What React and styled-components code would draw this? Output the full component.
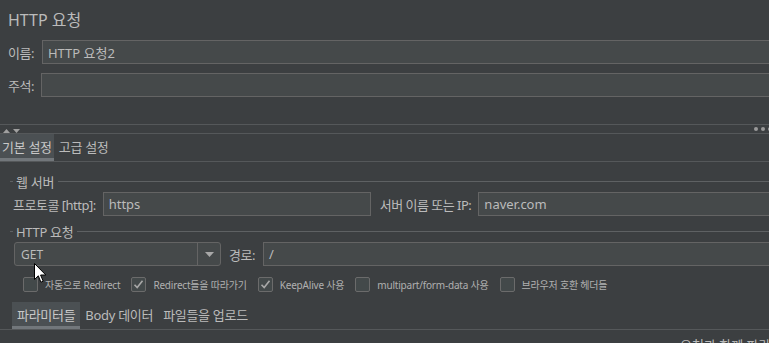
import React from 'react';
import styled, { createGlobalStyle } from 'styled-components';

const GlobalStyle = createGlobalStyle`
  html, body {
    margin: 0;
    padding: 0;
    background: #3c3f41;
    overflow: hidden;
  }
  body {
    font-family: "Noto Sans", "Noto Sans CJK KR", sans-serif;
    color: #bbbbbb;
  }
`;

const Page = styled.div`
  position: relative;
  width: 800px;
  height: 343px;
  background: #3c3f41;
  overflow: hidden;
  font-size: 13px;
`;

const Header = styled.div`
  padding: 10px 0 0 8px;
`;

const Title = styled.div`
  font-size: 16px;
  line-height: 20px;
  height: 20px;
`;

const FieldRow = styled.div`
  display: flex;
  align-items: center;
  gap: ${p => p.$gap || 7}px;
  margin-top: ${p => p.$top || 0}px;
  padding-left: ${p => p.$left || 0}px;
`;

const Label = styled.span`
  white-space: nowrap;
  font-size: 13px;
  letter-spacing: -0.5px;
  margin-left: ${p => p.$ml || 0}px;
`;

const TextBox = styled.div`
  box-sizing: border-box;
  height: 24px;
  flex: ${p => (p.$width ? '0 0 auto' : '1')};
  width: ${p => (p.$width ? `${p.$width}px` : 'auto')};
  border: 1px solid #646464;
  background: #45494a;
  padding: 0 5px;
  display: flex;
  align-items: center;
  font-size: 13px;
  color: #bbbbbb;
  white-space: nowrap;
`;

const SplitDivider = styled.div`
  margin-top: 27px;
  height: 8px;
  border-top: 1px solid #55585a;
  border-bottom: 1px solid #55585a;
  display: flex;
  align-items: center;
  justify-content: space-between;
  padding: 0 0 0 3px;
  width: 769px;
`;

const Arrows = styled.div`
  display: flex;
  gap: 3px;
  margin-top: 3px;
`;

const Dots = styled.div`
  display: flex;
  gap: 3px;
`;

const Dot = styled.span`
  width: 4px;
  height: 4px;
  border-radius: 50%;
  background: #9a9a9a;
`;

const TabBar = styled.div`
  display: flex;
  height: 27px;
  border-bottom: 1px solid #55585a;
  padding-left: ${p => p.$left || 0}px;
  margin-top: ${p => p.$top || 0}px;
`;

const Tab = styled.div`
  display: flex;
  align-items: center;
  padding: 0 ${p => p.$pad || 3}px 2px;
  font-size: 13px;
  letter-spacing: -0.3px;
  white-space: nowrap;
  background: ${p => (p.$active ? '#4b5053' : 'transparent')};
  box-shadow: ${p => (p.$active ? 'inset 0 -3px 0 #72777b' : 'none')};
  color: ${p => (p.$active ? '#c8c8c8' : '#bbbbbb')};
`;

const Group = styled.div`
  margin-top: ${p => p.$top}px;
`;

const GroupTitle = styled.div`
  display: flex;
  align-items: center;
  height: 18px;
  padding-left: 10px;
  font-size: 13px;
  letter-spacing: -0.3px;

  &::before {
    content: '';
    width: 3px;
    height: 1px;
    background: #5e6163;
    margin-right: 3px;
  }
  &::after {
    content: '';
    flex: 1;
    height: 1px;
    background: #5e6163;
    margin-left: 4px;
  }
`;

const Select = styled.div`
  box-sizing: border-box;
  width: 207px;
  height: 24px;
  border: 1px solid #646464;
  border-radius: 3px;
  background: #45494a;
  display: flex;
  align-items: stretch;
`;

const SelectValue = styled.div`
  flex: 1;
  display: flex;
  align-items: center;
  padding-left: 6px;
  font-size: 12px;
`;

const SelectArrow = styled.div`
  width: 22px;
  border-left: 1px solid #646464;
  display: flex;
  align-items: center;
  justify-content: center;
`;

const CheckRow = styled.div`
  display: flex;
  align-items: center;
  padding-left: 23px;
  margin-top: 11px;
  height: 15px;
`;

const CheckItem = styled.label`
  display: flex;
  align-items: center;
  gap: 7px;
  margin-right: ${p => p.$gap || 11}px;
  font-size: 10px;
  letter-spacing: -0.2px;
  white-space: nowrap;
  color: #b0b0b0;
`;

const Box = styled.span`
  box-sizing: border-box;
  width: 15px;
  height: 15px;
  border: 1px solid #6b6b6b;
  border-radius: 2px;
  background: #43494a;
  display: flex;
  align-items: center;
  justify-content: center;
`;

const BottomHeader = styled.div`
  padding-left: 680px;
  margin-top: 5px;
  font-size: 13px;
  white-space: nowrap;
`;

const Cursor = styled.svg`
  position: absolute;
  left: 34px;
  top: 263px;
`;

const Check = ({ checked, children, gap }) => (
  <CheckItem $gap={gap}>
    <Box>
      {checked && (
        <svg width="11" height="11" viewBox="0 0 11 11">
          <path d="M1.5 5.8 L4.2 8.6 L9.5 1.8" fill="none" stroke="#a8a8a8" strokeWidth="1.6" />
        </svg>
      )}
    </Box>
    {children}
  </CheckItem>
);

export default function App() {
  return (
    <Page>
      <GlobalStyle />
      <Header>
        <Title>HTTP 요청</Title>
        <FieldRow $top={10} $gap={8}>
          <Label>이름:</Label>
          <TextBox>HTTP 요청2</TextBox>
        </FieldRow>
        <FieldRow $top={9} $gap={7}>
          <Label>주석:</Label>
          <TextBox />
        </FieldRow>
      </Header>

      <SplitDivider>
        <Arrows>
          <svg width="7" height="4" viewBox="0 0 7 4"><path d="M0 4 L3.5 0 L7 4 Z" fill="#a0a0a0" /></svg>
          <svg width="7" height="4" viewBox="0 0 7 4"><path d="M0 0 L7 0 L3.5 4 Z" fill="#a0a0a0" /></svg>
        </Arrows>
        <Dots>
          <Dot />
          <Dot />
          <Dot />
        </Dots>
      </SplitDivider>

      <TabBar $left={0}>
        <Tab $active $pad={2}>기본 설정</Tab>
        <Tab $pad={5}>고급 설정</Tab>
      </TabBar>

      <Group $top={10}>
        <GroupTitle>웹 서버</GroupTitle>
        <FieldRow $top={2} $left={13} $gap={7}>
          <Label>프로토콜 [http]:</Label>
          <TextBox $width={268}>https</TextBox>
          <Label $ml={2}>서버 이름 또는 IP:</Label>
          <TextBox>naver.com</TextBox>
        </FieldRow>
      </Group>

      <Group $top={6}>
        <GroupTitle>HTTP 요청</GroupTitle>
        <FieldRow $top={2} $left={14} $gap={8}>
          <Select>
            <SelectValue>GET</SelectValue>
            <SelectArrow>
              <svg width="9" height="5" viewBox="0 0 9 5"><path d="M0 0 L9 0 L4.5 5 Z" fill="#a8a8a8" /></svg>
            </SelectArrow>
          </Select>
          <Label>경로:</Label>
          <TextBox>/</TextBox>
        </FieldRow>
        <CheckRow>
          <Check>자동으로 Redirect</Check>
          <Check checked>Redirect들을 따라가기</Check>
          <Check checked>KeepAlive 사용</Check>
          <Check>multipart/form-data 사용</Check>
          <Check>브라우저 호환 헤더들</Check>
        </CheckRow>
      </Group>

      <TabBar $left={12} $top={10}>
        <Tab $active $pad={5}>파라미터들</Tab>
        <Tab $pad={5}>Body 데이터</Tab>
        <Tab $pad={5}>파일들을 업로드</Tab>
      </TabBar>

      <BottomHeader>요청과 함께 파라미터들을 보내기:</BottomHeader>

      <Cursor width="13" height="21" viewBox="0 0 13 21">
        <path d="M0.5 0.5 L0.5 16.5 L4.3 12.8 L6.9 19.2 L9.2 18.2 L6.6 12 L11.8 12 Z" fill="#ffffff" stroke="#000000" strokeWidth="1" strokeLinejoin="round" />
      </Cursor>
    </Page>
  );
}
